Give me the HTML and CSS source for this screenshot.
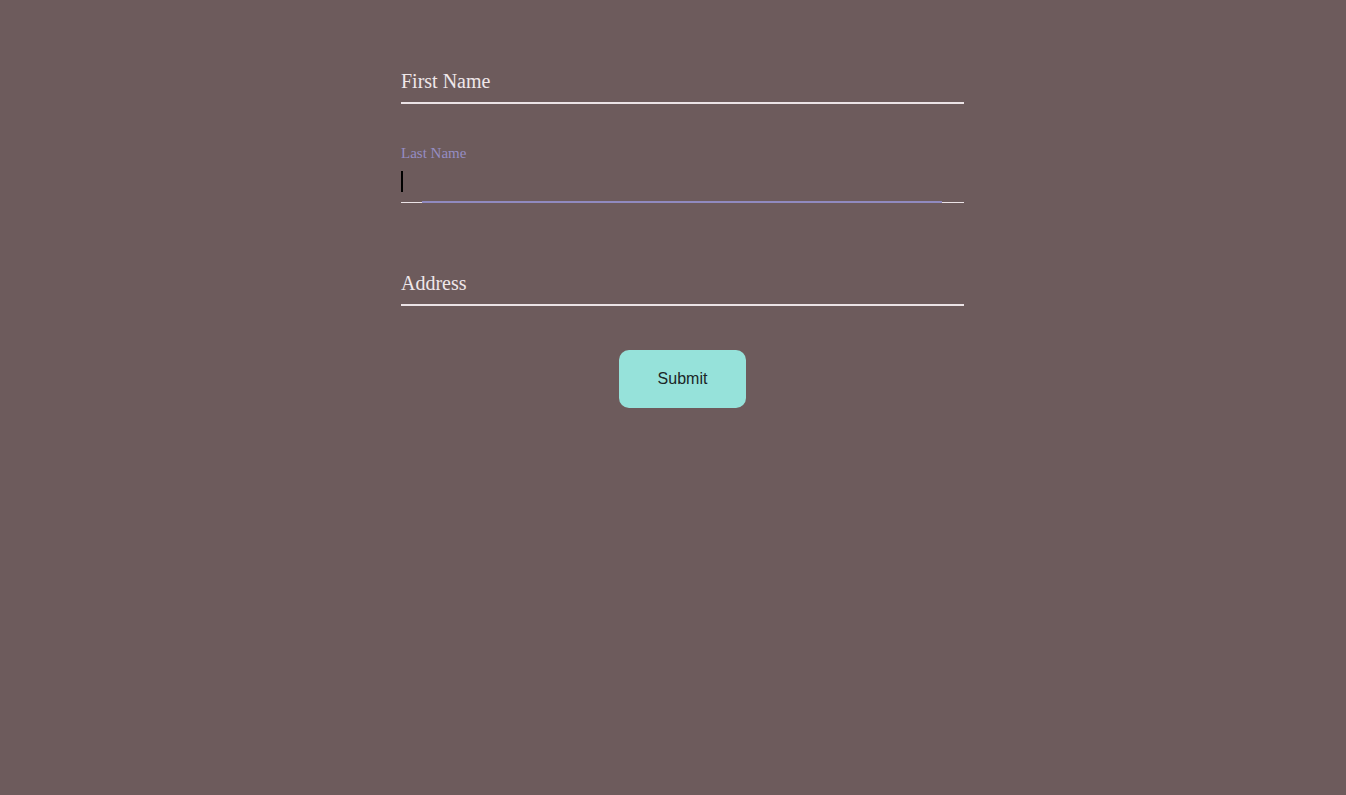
FILE: index.html
```html
<!DOCTYPE html>
<html>
<head>
<meta charset="utf-8">
<link rel="stylesheet" href="styles.css">
</head>
<body>
<form class="form">
  <div class="field field-first">
    <label class="label">First Name</label>
  </div>
  <div class="field field-focused">
    <label class="label label-float">Last Name</label>
    <span class="caret"></span>
    <span class="focus-bar"></span>
  </div>
  <div class="field field-last">
    <label class="label">Address</label>
  </div>
  <div class="actions">
    <button type="button" class="submit">Submit</button>
  </div>
</form>
</body>
</html>
```
FILE: styles.css
```css
html, body {
  margin: 0;
  padding: 0;
  background: #6d5b5c;
}
body {
  height: 795px;
  font-family: "Liberation Serif", "Times New Roman", serif;
}
.form {
  display: flex;
  flex-direction: column;
  width: 563px;
  margin-left: 401px;
  padding-top: 60px;
}
.field {
  position: relative;
  box-sizing: border-box;
  height: 44px;
  border-bottom: 2px solid #ebe3e6;
  display: flex;
  flex-direction: column;
}
.field-focused {
  margin-top: 55px;
  border-bottom: 1px solid #ebe3e6;
}
.field-last {
  margin-top: 59px;
}
.label {
  margin-top: 10px;
  font-size: 20px;
  line-height: 23px;
  color: #efe7ea;
}
.label-float {
  position: absolute;
  top: -14px;
  left: 0;
  margin-top: 0;
  font-size: 15px;
  line-height: 17px;
  color: #958dc3;
}
.caret {
  margin-top: 12px;
  width: 2px;
  height: 21px;
  background: #000;
}
.focus-bar {
  position: absolute;
  left: 21px;
  right: 22px;
  bottom: -1px;
  height: 2px;
  background: #908abf;
}
.actions {
  display: flex;
  justify-content: center;
  margin-top: 44px;
}
.submit {
  width: 127px;
  height: 58px;
  border: none;
  border-radius: 10px;
  background: #96e2da;
  color: #1b2626;
  font-family: "Liberation Sans", Arial, sans-serif;
  font-size: 16px;
  padding: 0;
}
```
